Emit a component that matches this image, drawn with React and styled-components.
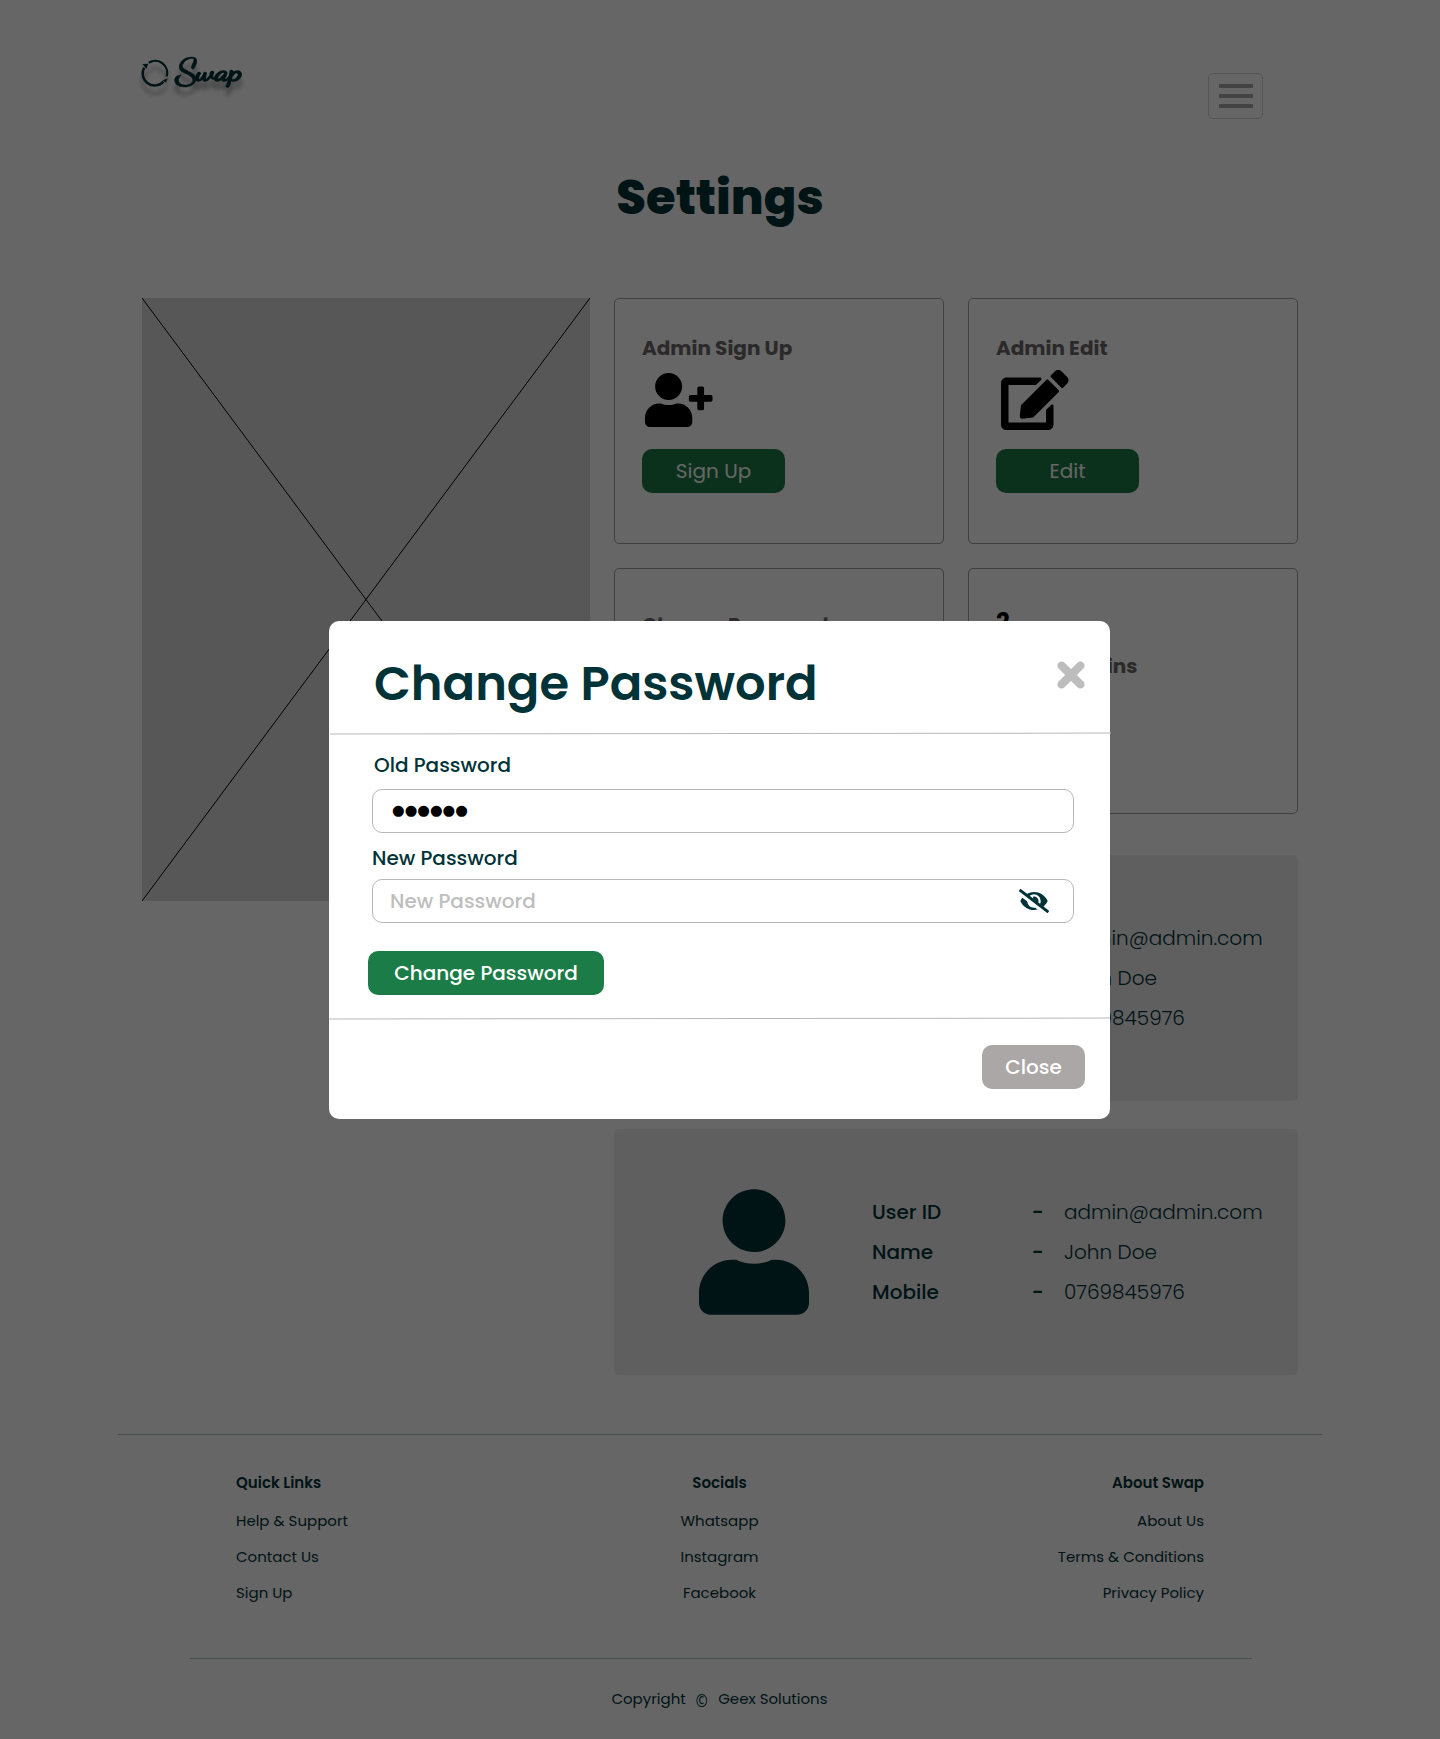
import React from 'react';
import styled, { createGlobalStyle } from 'styled-components';
import { FaUserPlus, FaEdit, FaUser, FaEyeSlash } from 'react-icons/fa';

const ink = '#003338';
const green = '#1c7c47';

const GlobalStyle = createGlobalStyle`
  * { box-sizing: border-box; }
  body {
    margin: 0;
    background: #fff;
    color: ${ink};
    font-family: Poppins, Inter, "Open Sans", sans-serif;
  }
  h1, h2, h3, p, ul, dl, dd, dt { margin: 0; padding: 0; font-weight: inherit; font-size: inherit; }
  button, input { font: inherit; }
`;

const Page = styled.div`
  width: 1440px;
  height: 1739px;
  overflow: hidden;
  position: relative;
`;

const Header = styled.header`
  display: flex;
  justify-content: space-between;
  align-items: flex-start;
  height: 119px;
  padding: 50px 177px 0 136px;
`;

const Logo = styled.svg`
  display: block;
  overflow: visible;
  filter: drop-shadow(0 8px 2px rgba(0, 0, 0, 0.3));
`;

const MenuButton = styled.button`
  display: flex;
  flex-direction: column;
  align-items: center;
  justify-content: center;
  gap: 5.5px;
  width: 55px;
  height: 46px;
  margin-top: 23px;
  padding: 0;
  background: transparent;
  border: 1px solid #d4d4d4;
  border-radius: 5px;
`;

const MenuBar = styled.span`
  width: 34px;
  height: 4.5px;
  background: #a7a7a7;
`;

const PageTitle = styled.h1`
  margin-top: 43px;
  font-size: 48px;
  font-weight: 800;
  line-height: 72px;
  text-align: center;
`;

const Main = styled.main`
  display: flex;
  align-items: flex-start;
  gap: 24px;
  padding: 64px 142px 0;
`;

const Placeholder = styled.svg`
  display: block;
  flex: none;
  width: 448px;
  height: 603px;
  background: #d9d9d9;
`;

const Column = styled.div`
  display: flex;
  flex-direction: column;
  width: 684px;
`;

const CardGrid = styled.section`
  display: grid;
  grid-template-columns: 330px 330px;
  grid-auto-rows: 246px;
  gap: 24px;
  margin-bottom: 41px;
`;

const Card = styled.article`
  padding: ${(p) => p.$top}px 27px 0;
  border: 1px solid #a0a0a0;
  border-radius: 5px;
`;

const CardTitle = styled.h2`
  font-size: 20px;
  font-weight: 700;
  line-height: 30px;
  color: #6b6768;
  word-spacing: ${(p) => p.$wordGap || 0}px;
`;

const CardCount = styled.p`
  margin-bottom: 14px;
  font-size: 24px;
  font-weight: 700;
  line-height: 30px;
  color: #000;
`;

const CardIcon = styled.div`
  height: 86px;
  padding: ${(p) => p.$y}px 0 0 ${(p) => p.$x}px;
  color: #000;

  svg { display: block; width: 67.5px; height: ${(p) => p.$h}px; }
`;

const Button = styled.button`
  display: flex;
  align-items: center;
  justify-content: center;
  width: ${(p) => p.$width}px;
  height: 44px;
  padding: 0;
  border: 0;
  border-radius: 10px;
  background: ${(p) => p.$color || green};
  color: #fff;
  font-size: 20px;
  font-weight: ${(p) => p.$weight || 400};
  line-height: 30px;
`;

const Panels = styled.section`
  display: flex;
  flex-direction: column;
  gap: 28px;
`;

const Panel = styled.article`
  display: flex;
  align-items: flex-start;
  height: 246px;
  padding-left: 85px;
  border-radius: 5px;
  background: #eee;
`;

const Avatar = styled(FaUser)`
  display: block;
  width: 110px;
  height: 126px;
  margin-top: 60px;
`;

const Details = styled.dl`
  display: grid;
  grid-template-columns: 160px 32px auto;
  margin: 63px 0 0 63px;
  font-size: 20px;
  line-height: 40px;
`;

const Term = styled.dt`font-weight: 500;`;
const Dash = styled.dd`font-weight: 600;`;
const Value = styled.dd`font-weight: 300;`;

const Footer = styled.footer`
  margin: 59px 118px 0;
  border-top: 1px solid #b0c2c3;
`;

const LinkGroups = styled.div`
  display: grid;
  grid-template-columns: repeat(3, 1fr);
  height: 223px;
  padding: 30px 118px 0;
`;

const LinkGroup = styled.div`
  text-align: ${(p) => p.$align};
  padding-right: ${(p) => (p.$align === 'center' ? 1 : 0)}px;
  font-size: 15px;
`;

const GroupTitle = styled.h3`
  height: 38px;
  font-weight: 600;
  line-height: 36px;
`;

const GroupLinks = styled.ul`
  list-style: none;
  line-height: 36px;
`;

const Copyright = styled.div`
  display: flex;
  justify-content: center;
  gap: 10px;
  margin: 0 70px 0 72px;
  padding: 25px 3px 0 0;
  border-top: 1px solid #b0c2c3;
  font-size: 15px;
  line-height: 30px;
`;

const CopyMark = styled.span`
  width: 12.5px;
  padding-top: 2px;
  font-family: "Open Sans", sans-serif;
  font-size: 14.5px;
  font-weight: 600;
  transform: scaleY(1.2);
`;

const Backdrop = styled.div`
  position: absolute;
  inset: 0;
  padding: 621px 0 0 329px;
  background: rgba(0, 0, 0, 0.6);
`;

const Modal = styled.section`
  width: 781px;
  height: 498px;
  border-radius: 10px;
  background: #fff;
`;

const ModalHeader = styled.header`
  display: flex;
  justify-content: space-between;
  height: 111.5px;
  padding: 26px 25px 0 43px;
`;

const ModalTitle = styled.h2`
  padding: 1px 0 0 2px;
  font-size: 48px;
  font-weight: 600;
  line-height: 72px;
`;

const CloseIcon = styled.svg`
  display: block;
  width: 28px;
  height: 28px;
  margin-top: 14px;
  stroke: #bdbdbd;
  stroke-width: 8.4;
  stroke-linecap: round;
`;

const Divider = styled.div`
  width: 781px;
  height: 1px;
  margin-left: ${(p) => p.$shift || 0}px;
  background: #b8b8b8;
  transform: rotate(-0.07deg);
`;

const Form = styled.form`
  height: 284px;
  padding: 16px 36px 0 43px;
`;

const Label = styled.label`
  display: block;
  padding-left: ${(p) => p.$indent || 0}px;
  margin-bottom: ${(p) => p.$gap}px;
  font-size: 20px;
  font-weight: 500;
  line-height: 30px;
`;

const Field = styled.div`
  display: flex;
  align-items: center;
  justify-content: space-between;
  height: 44px;
  margin-bottom: ${(p) => p.$after}px;
  padding: 0 24px 0 17px;
  border: 1px solid #b8b8b8;
  border-radius: 10px;
  font-size: 20px;
  font-weight: 500;
  line-height: 30px;
  color: #bebebe;

  svg { width: 30px; height: 24px; color: ${ink}; }
`;

const Dots = styled.span`
  padding: 0 0 2px 2px;
  font-family: "DejaVu Sans", sans-serif;
  font-size: 14.5px;
  font-weight: 400;
  line-height: 20px;
  color: #000;
`;

const SubmitRow = styled.div`margin-left: -4px;`;

const ModalFooter = styled.footer`
  display: flex;
  justify-content: flex-end;
  padding: 26px 25px 0 0;
`;

const people = [
  { id: 'admin@admin.com', name: 'John Doe', mobile: '0769845976' },
  { id: 'admin@admin.com', name: 'John Doe', mobile: '0769845976' },
];

const groups = [
  { title: 'Quick Links', align: 'left', links: ['Help & Support', 'Contact Us', 'Sign Up'] },
  { title: 'Socials', align: 'center', links: ['Whatsapp', 'Instagram', 'Facebook'] },
  { title: 'About Swap', align: 'right', links: ['About Us', 'Terms & Conditions', 'Privacy Policy'] },
];

function SwapLogo() {
  return (
    <Logo width="112" height="50" viewBox="0 0 112 50" fill={ink}>
      <g fill="none" stroke={ink} strokeWidth="2.4">
        <path d="M12.8 12.7 A12 12 0 0 1 30.6 26.5" />
        <path d="M27.5 31.6 A12 12 0 0 1 8.2 17.6" />
      </g>
      <path d="M6.4 14 L12.2 13.8 L10.4 19 Z M31.6 28.2 L26.4 30.4 L30 32.6 Z" />
      <g fontFamily='"Dancing Script", "Liberation Serif", cursive' fontWeight="700" stroke={ink}>
        <text x="38.5" y="34" fontSize="37" strokeWidth="0.5" textLength="24" lengthAdjust="spacingAndGlyphs">S</text>
        <text x="60" y="30" fontSize="26" strokeWidth="1.5" textLength="46" lengthAdjust="spacingAndGlyphs">wap</text>
      </g>
    </Logo>
  );
}

function PersonPanel({ person }) {
  const rows = [
    ['User ID', person.id],
    ['Name', person.name],
    ['Mobile', person.mobile],
  ];
  return (
    <Panel>
      <Avatar />
      <Details>
        {rows.map(([term, value]) => (
          <React.Fragment key={term}>
            <Term>{term}</Term>
            <Dash>-</Dash>
            <Value>{value}</Value>
          </React.Fragment>
        ))}
      </Details>
    </Panel>
  );
}

function PasswordModal() {
  return (
    <Backdrop>
      <Modal role="dialog">
        <ModalHeader>
          <ModalTitle>Change Password</ModalTitle>
          <CloseIcon viewBox="0 0 28 28"><path d="M4.6 4.6 L23.4 23.4 M23.4 4.6 L4.6 23.4" /></CloseIcon>
        </ModalHeader>
        <Divider $shift={1} />
        <Form>
          <Label $gap={9} $indent={2}>Old Password</Label>
          <Field $after={10}><Dots>●●●●●●</Dots></Field>
          <Label $gap={6}>New Password</Label>
          <Field $after={28}>
            <span>New Password</span>
            <FaEyeSlash />
          </Field>
          <SubmitRow>
            <Button type="button" $width={236} $weight={500}>Change Password</Button>
          </SubmitRow>
        </Form>
        <Divider />
        <ModalFooter>
          <Button type="button" $width={103} $weight={500} $color="#aba7a7">Close</Button>
        </ModalFooter>
      </Modal>
    </Backdrop>
  );
}

export default function App() {
  return (
    <Page>
      <GlobalStyle />
      <Header>
        <SwapLogo />
        <MenuButton><MenuBar /><MenuBar /><MenuBar /></MenuButton>
      </Header>
      <PageTitle>Settings</PageTitle>
      <Main>
        <Placeholder viewBox="0 0 448 603">
          <path d="M0 0 L448 603 M448 0 L0 603" stroke="#000" fill="none" />
        </Placeholder>
        <Column>
          <CardGrid>
            <Card $top={34}>
              <CardTitle>Admin Sign Up</CardTitle>
              <CardIcon $x={3} $y={10} $h={54}><FaUserPlus /></CardIcon>
              <Button $width={143}>Sign Up</Button>
            </Card>
            <Card $top={34}>
              <CardTitle>Admin Edit</CardTitle>
              <CardIcon $x={5} $y={7} $h={60}><FaEdit /></CardIcon>
              <Button $width={143}>Edit</Button>
            </Card>
            <Card $top={41}>
              <CardTitle>Change Password</CardTitle>
            </Card>
            <Card $top={38}>
              <CardCount>2</CardCount>
              <CardTitle $wordGap={5}>Total Admins</CardTitle>
            </Card>
          </CardGrid>
          <Panels>
            {people.map((person, i) => <PersonPanel key={i} person={person} />)}
          </Panels>
        </Column>
      </Main>
      <Footer>
        <LinkGroups>
          {groups.map((group) => (
            <LinkGroup key={group.title} $align={group.align}>
              <GroupTitle>{group.title}</GroupTitle>
              <GroupLinks>
                {group.links.map((label) => <li key={label}>{label}</li>)}
              </GroupLinks>
            </LinkGroup>
          ))}
        </LinkGroups>
        <Copyright>
          <span>Copyright</span>
          <CopyMark>©</CopyMark>
          <span>Geex Solutions</span>
        </Copyright>
      </Footer>
      <PasswordModal />
    </Page>
  );
}
